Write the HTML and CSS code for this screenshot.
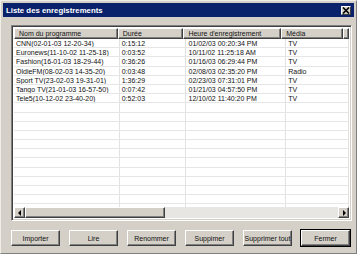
FILE: index.html
```html
<!DOCTYPE html>
<html lang="fr">
<head>
    <meta charset="UTF-8">
    <title>Liste des enregistrements</title>
    <link rel="stylesheet" href="styles.css">
</head>
<body>
    <div class="dialog">
        <div class="titlebar">
            <span class="title">Liste des enregistrements</span>
            <span class="close-btn">
                <svg width="8" height="7" viewBox="0 0 8 7">
                    <path d="M1 0.5 L7 6.5 M7 0.5 L1 6.5" stroke="#000" stroke-width="1.6"/>
                </svg>
            </span>
        </div>

        <div class="listview">
            <div class="rows">
                <div class="row header">
                    <div class="cell c1">Nom du programme</div>
                    <div class="cell c2">Durée</div>
                    <div class="cell c3">Heure d'enregistrement</div>
                    <div class="cell c4">Média</div>
                    <div class="cell c5"></div>
                </div>
                <div class="row"><div class="cell c1">CNN(02-01-03 12-20-34)</div><div class="cell c2">0:15:12</div><div class="cell c3">01/02/03 00:20:34 PM</div><div class="cell c4">TV</div></div>
                <div class="row"><div class="cell c1">Euronews(11-10-02 11-25-18)</div><div class="cell c2">0:03:52</div><div class="cell c3">10/11/02 11:25:18 AM</div><div class="cell c4">TV</div></div>
                <div class="row"><div class="cell c1">Fashion(16-01-03 18-29-44)</div><div class="cell c2">0:36:26</div><div class="cell c3">01/16/03 06:29:44 PM</div><div class="cell c4">TV</div></div>
                <div class="row"><div class="cell c1">OldieFM(08-02-03 14-35-20)</div><div class="cell c2">0:03:48</div><div class="cell c3">02/08/03 02:35:20 PM</div><div class="cell c4">Radio</div></div>
                <div class="row"><div class="cell c1">Sport TV(23-02-03 19-31-01)</div><div class="cell c2">1:36:29</div><div class="cell c3">02/23/03 07:31:01 PM</div><div class="cell c4">TV</div></div>
                <div class="row"><div class="cell c1">Tango TV(21-01-03 16-57-50)</div><div class="cell c2">0:07:42</div><div class="cell c3">01/21/03 04:57:50 PM</div><div class="cell c4">TV</div></div>
                <div class="row"><div class="cell c1">Tele5(10-12-02 23-40-20)</div><div class="cell c2">0:52:03</div><div class="cell c3">12/10/02 11:40:20 PM</div><div class="cell c4">TV</div></div>
                <div class="row"><div class="cell c1"></div><div class="cell c2"></div><div class="cell c3"></div><div class="cell c4"></div></div>
                <div class="row"><div class="cell c1"></div><div class="cell c2"></div><div class="cell c3"></div><div class="cell c4"></div></div>
                <div class="row"><div class="cell c1"></div><div class="cell c2"></div><div class="cell c3"></div><div class="cell c4"></div></div>
                <div class="row"><div class="cell c1"></div><div class="cell c2"></div><div class="cell c3"></div><div class="cell c4"></div></div>
                <div class="row"><div class="cell c1"></div><div class="cell c2"></div><div class="cell c3"></div><div class="cell c4"></div></div>
                <div class="row"><div class="cell c1"></div><div class="cell c2"></div><div class="cell c3"></div><div class="cell c4"></div></div>
                <div class="row"><div class="cell c1"></div><div class="cell c2"></div><div class="cell c3"></div><div class="cell c4"></div></div>
                <div class="row"><div class="cell c1"></div><div class="cell c2"></div><div class="cell c3"></div><div class="cell c4"></div></div>
                <div class="row"><div class="cell c1"></div><div class="cell c2"></div><div class="cell c3"></div><div class="cell c4"></div></div>
                <div class="row"><div class="cell c1"></div><div class="cell c2"></div><div class="cell c3"></div><div class="cell c4"></div></div>
                <div class="row"><div class="cell c1"></div><div class="cell c2"></div><div class="cell c3"></div><div class="cell c4"></div></div>
                <div class="row"><div class="cell c1"></div><div class="cell c2"></div><div class="cell c3"></div><div class="cell c4"></div></div>
                <div class="row"><div class="cell c1"></div><div class="cell c2"></div><div class="cell c3"></div><div class="cell c4"></div></div>
            </div>
            <div class="hscroll">
                <span class="sb-btn">
                    <svg width="4" height="6" viewBox="0 0 4 6"><path d="M3 0 L0 3 L3 6 Z" fill="#000"/></svg>
                </span>
                <span class="sb-thumb"></span>
                <span class="sb-track"></span>
                <span class="sb-btn">
                    <svg width="4" height="6" viewBox="0 0 4 6"><path d="M1 0 L4 3 L1 6 Z" fill="#000"/></svg>
                </span>
            </div>
        </div>

        <div class="buttons">
            <button>Importer</button>
            <button>Lire</button>
            <button>Renommer</button>
            <button>Suppimer</button>
            <button>Supprimer tout</button>
            <button class="default">Fermer</button>
        </div>
    </div>
</body>
</html>
```

FILE: styles.css
```css
body {
    margin: 0;
    padding: 0;
    width: 357px;
    height: 254px;
    overflow: hidden;
    background-color: #d4d0c8;
    font-family: "Liberation Sans", Arial, sans-serif;
    font-size: 7px;
    color: #111;
}

.dialog {
    width: 357px;
    height: 254px;
    box-sizing: border-box;
    border-top: 1px solid #f0eee9;
    border-left: 1px solid #f0eee9;
    border-right: 1px solid #808080;
    border-bottom: 1px solid #808080;
    padding: 2px 2px 0 2px;
    display: flex;
    flex-direction: column;
}

.titlebar {
    height: 14px;
    background-color: #0a216b;
    display: flex;
    align-items: center;
    justify-content: space-between;
    padding: 0 3px 0 3px;
}

.title {
    color: #fff;
    font-weight: bold;
    font-size: 7.8px;
}

.close-btn {
    width: 10px;
    height: 9px;
    box-sizing: border-box;
    background-color: #d4d0c8;
    border-top: 1px solid #fff;
    border-left: 1px solid #fff;
    border-right: 1px solid #404040;
    border-bottom: 1px solid #404040;
    display: flex;
    align-items: center;
    justify-content: center;
}

.listview {
    margin: 8px 2px 0 8px;
    height: 196px;
    box-sizing: border-box;
    border-top: 1px solid #808080;
    border-left: 1px solid #808080;
    border-right: 1px solid #fff;
    border-bottom: 1px solid #fff;
    box-shadow: inset 1px 1px 0 #404040, inset -1px -1px 0 #d4d0c8;
    background-color: #fff;
    padding: 2px;
    display: flex;
    flex-direction: column;
    overflow: hidden;
}

.rows {
    flex: 1;
    overflow: hidden;
}

.row {
    display: flex;
    height: 9.2px;
    line-height: 9.2px;
    border-bottom: 1px solid #e6e6e6;
    box-sizing: border-box;
}

.row.header {
    height: 11px;
    line-height: 10px;
    border-bottom: none;
    background-color: #d4d0c8;
}

.cell {
    white-space: nowrap;
    overflow: hidden;
    box-sizing: border-box;
    padding-left: 2px;
    border-right: 1px solid #e2e2e2;
}

.header .cell {
    padding-left: 4px;
    border-top: 1px solid #fff;
    border-left: 1px solid #fff;
    border-right: 1px solid #404040;
    border-bottom: 1px solid #404040;
    box-shadow: inset -1px -1px 0 #808080;
}

.c1 { width: 106px; }
.c2 { width: 67px; }
.c3 { width: 100px; }
.c4 { width: 63px; }
.c5 { flex: 1; }

.hscroll {
    height: 11px;
    display: flex;
    background-color: #e8e6e2;
}

.sb-btn,
.sb-thumb {
    box-sizing: border-box;
    background-color: #d4d0c8;
    border-top: 1px solid #fff;
    border-left: 1px solid #fff;
    border-right: 1px solid #404040;
    border-bottom: 1px solid #404040;
    box-shadow: inset -1px -1px 0 #808080;
}

.sb-btn {
    width: 11px;
    display: flex;
    align-items: center;
    justify-content: center;
}

.sb-thumb {
    width: 140px;
}

.sb-track {
    flex: 1;
}

.buttons {
    display: flex;
    justify-content: space-between;
    margin: 9px 4px 0 8px;
}

button {
    width: 49px;
    height: 16px;
    padding: 0;
    font-family: "Liberation Sans", Arial, sans-serif;
    font-size: 7px;
    color: #111;
    background-color: #d4d0c8;
    border-top: 1px solid #fff;
    border-left: 1px solid #fff;
    border-right: 1px solid #404040;
    border-bottom: 1px solid #404040;
    box-shadow: inset -1px -1px 0 #808080;
    white-space: nowrap;
}

button.default {
    outline: 1px solid #000;
}
```
